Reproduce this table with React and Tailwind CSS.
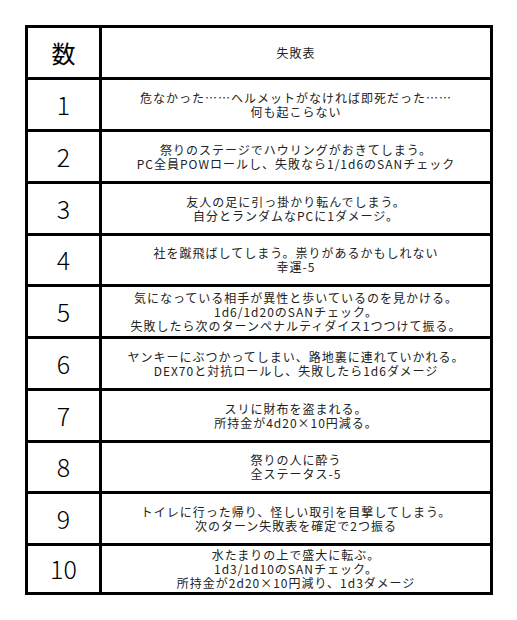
const rows = [
  { n: '1', h: 'h-[52px]', lines: ['危なかった……ヘルメットがなければ即死だった……', '何も起こらない'] },
  { n: '2', h: 'h-[52px]', lines: ['祭りのステージでハウリングがおきてしまう。', 'PC全員POWロールし、失敗なら1/1d6のSANチェック'] },
  { n: '3', h: 'h-[52px]', lines: ['友人の足に引っ掛かり転んでしまう。', '自分とランダムなPCに1ダメージ。'] },
  { n: '4', h: 'h-[51px]', lines: ['社を蹴飛ばしてしまう。祟りがあるかもしれない', '幸運-5'] },
  { n: '5', h: 'h-[52px]', lines: ['気になっている相手が異性と歩いているのを見かける。', '1d6/1d20のSANチェック。', '失敗したら次のターンペナルティダイス1つつけて振る。'] },
  { n: '6', h: 'h-[52px]', lines: ['ヤンキーにぶつかってしまい、路地裏に連れていかれる。', 'DEX70と対抗ロールし、失敗したら1d6ダメージ'] },
  { n: '7', h: 'h-[52px]', lines: ['スリに財布を盗まれる。', '所持金が4d20×10円減る。'] },
  { n: '8', h: 'h-[51px]', lines: ['祭りの人に酔う', '全ステータス-5'] },
  { n: '9', h: 'h-[52px]', lines: ['トイレに行った帰り、怪しい取引を目撃してしまう。', '次のターン失敗表を確定で2つ振る'] },
  { n: '10', h: 'h-[49px]', lines: ['水たまりの上で盛大に転ぶ。', '1d3/1d10のSANチェック。', '所持金が2d20×10円減り、1d3ダメージ'] },
];

export default function App() {
  return (
    <div className="min-h-[620px] bg-white pt-[25px] pl-[25px]" style={{ fontFamily: '"Noto Sans CJK JP", "Noto Sans", sans-serif' }}>
      <div className="w-[468px] border-[3px] border-black flex flex-col">
        {/* header */}
        <div className="grid grid-cols-[74px_1fr] h-[49px]">
          <div className="border-r-[3px] border-black flex items-center justify-center text-[24px] text-black">数</div>
          <div className="flex items-center justify-center text-[12px] tracking-[1px] text-[#222]">失敗表</div>
        </div>
        {rows.map((r) => (
          <div key={r.n} className={`grid grid-cols-[74px_1fr] border-t-[3px] border-black ${r.h}`}>
            <div className="border-r-[3px] border-black flex items-center justify-center text-[25px] font-light text-black">
              {r.n}
            </div>
            <div className="flex flex-col items-center justify-center text-[12px] leading-[14px] tracking-[1px] text-[#222]">
              {r.lines.map((l, i) => (
                <div key={i}>{l}</div>
              ))}
            </div>
          </div>
        ))}
      </div>
    </div>
  );
}
